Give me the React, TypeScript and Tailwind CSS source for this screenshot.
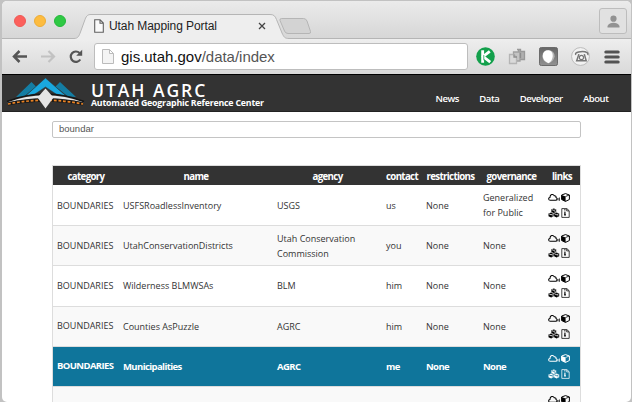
import React from 'react';

function CloudIcon() {
  return (
    <svg width="12" height="9" viewBox="0 0 12 9" fill="none" stroke="currentColor">
      <path d="M2.300 7.300C.2 7.300.1 4.700 2 4.400 1.900 1.400 5.200.5 6.300 2.800c1.200-.2 1.900.6 1.700 1.700 1.600.5 1.200 2.800-.3 2.800Z" strokeWidth="1.050" />
      <path d="M10 5v2.400M11.400 4.500v3.300" strokeWidth=".8" />
    </svg>
  );
}

function CubeIcon() {
  return (
    <svg width="9" height="9" viewBox="0 0 9 9">
      <path d="M4.500.6 8.400 2v4.500L4.500 8.400.6 6.500V2Z" fill="none" stroke="currentColor" strokeWidth="1" />
      <path d="M.7 2 4.600 3.500v4.900L.7 6.500Z" fill="currentColor" />
      <path d="M4.500 3.500 8.200 2" stroke="currentColor" strokeWidth=".8" />
    </svg>
  );
}

function CubesIcon() {
  return (
    <svg width="12" height="10" viewBox="0 0 12 10" fill="currentColor">
      <path d="M5.8.4 8.2 1.3v2.6L5.8 5 3.4 3.9V1.3ZM3.1 4.5l2.5 1v2.7L3.1 9.4.5 8.2V5.5ZM8.6 4.5l2.6 1v2.7L8.6 9.4 6.1 8.2V5.5Z" />
      <path d="m4 1.700 1.900.7 1.800-.7M1.100 5.900l2 .8 1.900-.8M6.700 5.900l2 .8 1.900-.8M7 4V3M4.300 8.400V7.400M9.900 8.400V7.400" fill="none" className="stroke-white group-data-[active=true]:stroke-[#0f759b]" strokeWidth=".8" />
    </svg>
  );
}

function ZipIcon() {
  return (
    <svg width="9" height="10" viewBox="0 0 9 10" fill="none" stroke="currentColor">
      <path d="M.8.600h5L8.200 2.700v6.700H.8ZM5.700.7v2.200H8" strokeWidth=".75" />
      <path d="M3.900 1v3.500" strokeWidth=".9" strokeDasharray="1 .5" />
      <path d="M3.900 4.300v3.200M3.100 6.900h1.800" strokeWidth="1.200" />
    </svg>
  );
}

function Links() {
  return (
    <div className="flex flex-col pl-[3.500px]">
      <div className="flex h-[15px] items-center gap-px"><CloudIcon /><CubeIcon /></div>
      <div className="flex h-[15px] items-center gap-px"><CubesIcon /><ZipIcon /></div>
    </div>
  );
}

const columns = 'grid grid-cols-[66px_154px_109px_40px_57px_65px_36px]';

const rows = [
  { name: 'USFSRoadlessInventory', agency: 'USGS', contact: 'us', gov: 'Generalized for Public', raised: false },
  { name: 'UtahConservationDistricts', agency: 'Utah Conservation Commission', contact: 'you', gov: 'None', raised: false },
  { name: 'Wilderness BLMWSAs', agency: 'BLM', contact: 'him', gov: 'None', raised: false },
  { name: 'Counties AsPuzzle', agency: 'AGRC', contact: 'him', gov: 'None', raised: true },
  { name: 'Municipalities', agency: 'AGRC', contact: 'me', gov: 'None', raised: true, active: true },
  { name: '', agency: '', contact: '', gov: '', raised: false },
];

function Row({ row, index }: { row: (typeof rows)[number]; index: number }) {
  const look = row.active
    ? 'bg-[#0f759b] text-white text-[9.500px] font-bold tracking-[-0.600px]'
    : index % 2
      ? 'bg-[#f9f9f9] text-[#333]'
      : 'bg-white text-[#333]';
  return (
    <div data-active={!!row.active} className={`group ${columns} ${index === 0 ? 'h-[41px]' : 'h-[40.250px]'} shrink-0 items-center border-b border-[#ddd] leading-[15px] ${look}`}>
      <div className={`pl-[4px] ${row.raised ? 'pb-[2px]' : ''}`}>{row.name && 'BOUNDARIES'}</div>
      <div className="pl-1">{row.name}</div>
      <div className="pl-1">{row.agency}</div>
      <div className="pl-1">{row.contact}</div>
      <div className="pl-1">{row.name && 'None'}</div>
      <div className="pl-1">{row.gov}</div>
      <div className={row.active ? 'text-white' : 'text-black'}><Links /></div>
    </div>
  );
}

function TabStrip() {
  return (
    <div className="relative flex h-[38px] shrink-0 bg-gradient-to-b from-[#ebebeb] to-[#d6d6d6]">
      <svg className="absolute inset-0" width="629" height="38" viewBox="0 0 629 38">
        <path d="M0 37.500H72C76 37.500 77 35 78.500 31L83 18.500C84.500 14.500 86 13.500 89 13.500H268C272 13.500 273 15 274.500 18.500L280 32C282 36.500 283 37.500 287 37.500H629V38H0Z" fill="#eeeeee" />
        <path d="M0 37.500H72C76 37.500 77 35 78.500 31L83 18.500C84.500 14.500 86 13.500 89 13.500H268C272 13.500 273 15 274.500 18.500L280 32C282 36.500 283 37.500 287 37.500H629" fill="none" stroke="#b5b5b5" />
        <path d="M279.500 17.500H301.500Q304 17.500 305 20L308.500 30.500Q309 32.500 307 32.500H286Q283.500 32.500 282.500 30L278 19.500Q277.500 17.500 279.500 17.500Z" fill="#d3d3d3" stroke="#b5b5b5" />
      </svg>
      <div className="relative flex h-[40px] items-center gap-2 pl-3">
        <span className="size-3 rounded-full border border-[#ef5955] bg-[#fc605c]" />
        <span className="size-3 rounded-full border border-[#edad35] bg-[#fdbc40]" />
        <span className="size-3 rounded-full border border-[#24b83b] bg-[#2fc944]" />
      </div>
      <div className="relative flex h-[26px] items-center pt-[24px] pl-[28px]">
        <svg width="10" height="14" viewBox="0 0 10 14" fill="#fafafa" stroke="#606060" strokeWidth="1.1"><path d="M.7.7h5.400L9.300 4v9.200H.7ZM6 .8V4.200h3.200" /></svg>
        <span className="ml-[5px] w-[108px] whitespace-nowrap text-[12px] tracking-[-0.080px] text-[#222]">Utah Mapping Portal</span>
        <svg className="ml-[41px]" width="8" height="8" viewBox="0 0 8 8" stroke="#444" strokeWidth="1.3"><path d="m1 1 6 6M7 1 1 7" /></svg>
      </div>
      <div className="relative mt-[7px] mr-[4px] ml-auto flex h-[26px] w-[28px] items-center justify-center rounded-[3px] border border-[#bdbdbd] bg-[#e1e1e1]">
        <svg width="13" height="13" viewBox="0 0 13 13" fill="#929292"><circle cx="6.500" cy="3.700" r="3.100" /><path d="M.5 12.500V11C1.500 8.500 4 7.800 6.500 7.800s5 .7 6 3.200v1.500Z" /></svg>
      </div>
    </div>
  );
}

function Toolbar() {
  return (
    <div className="flex h-[35px] shrink-0 items-center bg-gradient-to-b from-[#eeeeee] to-[#d9d9d9] pl-[10px]">
      <svg width="16" height="13" viewBox="0 0 16 13" fill="none" stroke="#555" strokeWidth="2.500"><path d="M15 6.500H2.500M7.500 1 2 6.500 7.500 12" /></svg>
      <svg className="ml-[12px]" width="16" height="13" viewBox="0 0 16 13" fill="none" stroke="#c2c2c2" strokeWidth="2.200"><path d="M1 6.500h12.500M8.500 1 14 6.500 8.500 12" /></svg>
      <svg className="ml-[12px]" width="16" height="15" viewBox="0 0 16 15"><path d="M12.300 10.500A5.200 5.200 0 1 1 11.600 4" fill="none" stroke="#555" strokeWidth="2.200" /><path d="M14.200.8v6H8.200Z" fill="#555" /></svg>
      <div className="ml-[10px] flex h-[27px] w-[374px] items-center rounded-[3px] border border-[#bdbdbd] bg-white pl-[7px]">
        <svg width="12" height="15" viewBox="0 0 12 15" fill="#f4f4f4" stroke="#bbb"><path d="M.5.5h7L11.500 4.500v10H.5ZM7.500.5v4h4" /></svg>
        <span className="ml-[7px] text-[15px] leading-5 tracking-[-0.020px] text-[#555]"><span className="text-[#111]">gis.utah.gov</span>/data/index</span>
      </div>
      <svg className="ml-[8px]" width="19" height="19" viewBox="0 0 20 20"><circle cx="10" cy="10" r="9.800" fill="#13a04c" /><path d="M7 3.500v13M14.500 4.500 7.500 10l7.500 6" fill="none" stroke="white" strokeWidth="3" /><path d="M8.200 8.500v5.500" stroke="#13a04c" strokeWidth=".8" fill="none" /></svg>
      <svg className="ml-[13px]" width="18" height="19" viewBox="0 0 18 19"><path d="M9 2.500h3.500v2h4v8h-6V2.500Z" fill="#b0b0b0" stroke="#999" strokeWidth="1.300" /><path d="M5.500 5h6.500v9H5.500Z" fill="#c4c4c4" stroke="#a0a0a0" strokeWidth="1.300" /><path d="M1.500 7.500h4.500l2.500 2.300v6.700h-7Z" fill="#dadada" stroke="#b5b5b5" strokeWidth="1.300" /><path d="M6 7.500v2.500h3M12.500 6v5" stroke="#8d8d8d" strokeWidth="1.300" fill="none" /></svg>
      <svg className="ml-[13px]" width="19" height="19" viewBox="0 0 20 20"><defs><linearGradient id="shade" x1="0" x2="0" y1="0" y2="1"><stop stopColor="#666" /><stop offset="1" stopColor="#929292" /></linearGradient></defs><rect x=".5" y=".5" width="19" height="19" rx="2" fill="url(#shade)" stroke="#666" /><path d="M3.500 9.500Q4 3.500 10 3.500 16.500 4 16.500 10 15 16.500 9.500 17 3.500 15 3.500 9.500Z" fill="#b5b5b5" /><path d="M4 9.500Q4 3.500 10 3.500q4.500.5 4.500 6-.5 5.500-4.500 7.500Q4 14.500 4 9.500Z" fill="white" /></svg>
      <svg className="ml-[13px]" width="19" height="19" viewBox="0 0 20 20"><circle cx="10" cy="10" r="9.400" fill="#f2f2f2" stroke="#b8b8b8" /><path d="M5 8.300Q4 6 8 5.200q6-1.200 9 .8 1.500 1.200.5 2.500M8.300 7.500 6 14.500h10L14 7.500" fill="none" stroke="#777" strokeWidth="1.600" /><circle cx="11" cy="11" r="2.200" fill="#f4f4f4" stroke="#777" strokeWidth="1.200" /></svg>
      <svg className="ml-[14px]" width="16" height="14" viewBox="0 0 16 14" stroke="#535353" strokeWidth="3" strokeLinecap="round"><path d="M1.800 2h12.400M1.800 7h12.400M1.800 12h12.400" /></svg>
    </div>
  );
}

function SiteHeader() {
  return (
    <header className="flex h-[38px] shrink-0 border-t border-b border-t-black border-b-[#222] bg-[#333] font-['Open_Sans',sans-serif] text-white">
      <svg className="mt-[3px] ml-[4px] shrink-0" width="80" height="32" viewBox="0 0 80 32">
        <path d="M10 19 25.500 4 30 8.500 18 18.500ZM70 19 54 4 49.500 8.500 62 18.500Z" fill="#147da3" />
        <path d="M19.500 18 39.500 0 60 18 50 16 39.500 9 29 16Z" fill="#19a8df" stroke="#333" strokeWidth=".5" />
        <path d="M1 23.500Q20 16 39.500 16T78 23.500" fill="none" stroke="#161616" strokeWidth="1.500" />
        <path d="M1 24.500Q20 17.300 39.500 17.300T78 24.500Q59 20 39.500 20T1 24.500" fill="#e8e8e8" />
        <path d="M2 26Q20 22.300 39.500 22.300T77 26" fill="none" stroke="#171717" strokeWidth="3" />
        <path d="M2 26Q20 22.300 39.500 22.300T77 26" fill="none" stroke="#e98224" strokeWidth="1.700" strokeDasharray="2.800 1.800" />
        <path d="M39.500 10.500 47.500 19.500 39.500 30.500 31.500 19.500Z" fill="#e4e4e4" />
      </svg>
      <div className="mt-[8px] ml-[5px] whitespace-nowrap">
        <div className="h-[15px] text-[17.500px] leading-[15px] font-semibold tracking-[1.950px]">UTAH AGRC</div>
        <div className="text-[8.800px] leading-[11px] font-bold tracking-[-0.200px]">Automated Geographic Reference Center</div>
      </div>
      <nav className="mt-[17px] mr-[22.500px] ml-auto flex gap-[20.400px] text-[9.500px] leading-[14px] font-semibold whitespace-nowrap tracking-[-0.450px]">
        <span>News</span><span>Data</span><span>Developer</span><span>About</span>
      </nav>
    </header>
  );
}

export default function App() {
  return (
    <div className="h-[402px] w-[632px] overflow-hidden bg-[#c2c2c2] pt-px pl-[2px] font-['Liberation_Sans',sans-serif]">
      <div className="flex h-[401px] w-[629px] flex-col overflow-hidden rounded-[5px] bg-white">
        <TabStrip />
        <Toolbar />
        <SiteHeader />
        <main className="flex flex-col pl-[50px] font-['Open_Sans',sans-serif] text-[9px]">
          <div className="mt-[9px] flex h-[17px] w-[529px] items-center rounded-[2px] border border-[#c4c4c4] pl-[6px] font-['Liberation_Sans',sans-serif] text-[9.500px] text-[#555]">boundar</div>
          <div className="mt-[27px] flex w-[529px] flex-col border border-[#ddd]">
            <div className={`${columns} h-[19px] items-center bg-[#333] pt-[1px] text-center text-[9.700px] leading-[15px] font-bold tracking-[-0.650px] text-white`}>
              <span>category</span><span>name</span><span>agency</span><span>contact</span><span>restrictions</span><span>governance</span><span>links</span>
            </div>
            {rows.map((row, i) => <Row key={i} row={row} index={i} />)}
          </div>
        </main>
      </div>
    </div>
  );
}
